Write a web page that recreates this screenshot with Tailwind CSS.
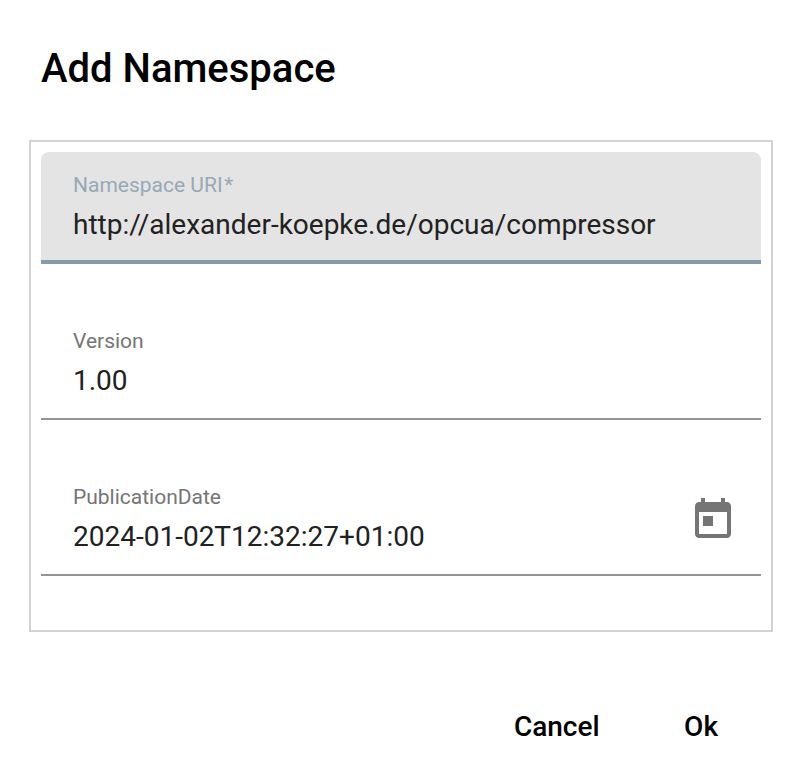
<!DOCTYPE html>
<html lang="en">
<head>
<meta charset="utf-8">
<title>Add Namespace</title>
<script src="https://cdn.jsdelivr.net/npm/@tailwindcss/browser@4"></script>
</head>
<body class="bg-white font-[Roboto,sans-serif] w-[796px] h-[767px] overflow-hidden">
<main class="flex flex-col h-full">
  <h1 class="pl-[41px] pt-[45px] h-[140px] text-[40px] leading-[48px] font-medium text-black">Add Namespace</h1>
  <section class="ml-[29px] w-[744px] h-[492px] border-2 border-[#d3d3d3] p-[10px] flex flex-col gap-[44px]">
    <label class="block h-[112px] shrink-0 rounded-t-lg bg-[#e4e4e4] border-b-4 border-[#869aaa] px-8 pt-[21px]">
      <span class="block text-[21px] leading-6 text-[#98a8b5]">Namespace URI<span class="ml-[1.5px]">*</span></span>
      <span class="block mt-[10px] text-[28px] leading-9 text-[#212121]">http://alexander-koepke.de/opcua/compressor</span>
    </label>
    <label class="block h-[112px] shrink-0 border-b-2 border-[#949494] px-8 pt-[21px]">
      <span class="block text-[21px] leading-6 text-[#757575]">Version</span>
      <span class="block mt-[10px] text-[28px] leading-9 text-[#212121]">1.00</span>
    </label>
    <div class="flex justify-between h-[112px] shrink-0 border-b-2 border-[#949494] pl-8 pr-6 pt-[21px]">
      <div>
        <span class="block text-[21px] leading-6 text-[#757575]">PublicationDate</span>
        <span class="block mt-[10px] text-[28px] leading-9 text-[#212121]">2024-01-02T12:32:27+01:00</span>
      </div>
      <svg class="mt-[11px] size-12" viewBox="0 0 24 24" fill="#757575"><path d="M19 3h-1V1h-2v2H8V1H6v2H5c-1.11 0-1.99.9-1.99 2L3 19c0 1.1.89 2 2 2h14c1.1 0 2-.9 2-2V5c0-1.1-.9-2-2-2zm0 16H5V8h14v11zM7 10h5v5H7z"/></svg>
    </div>
  </section>
  <div class="flex justify-end gap-[84.5px] pr-[78px] pt-[77px] text-[28px] leading-9 font-medium text-black">
    <button>Cancel</button><button>Ok</button>
  </div>
</main>
</body>
</html>
